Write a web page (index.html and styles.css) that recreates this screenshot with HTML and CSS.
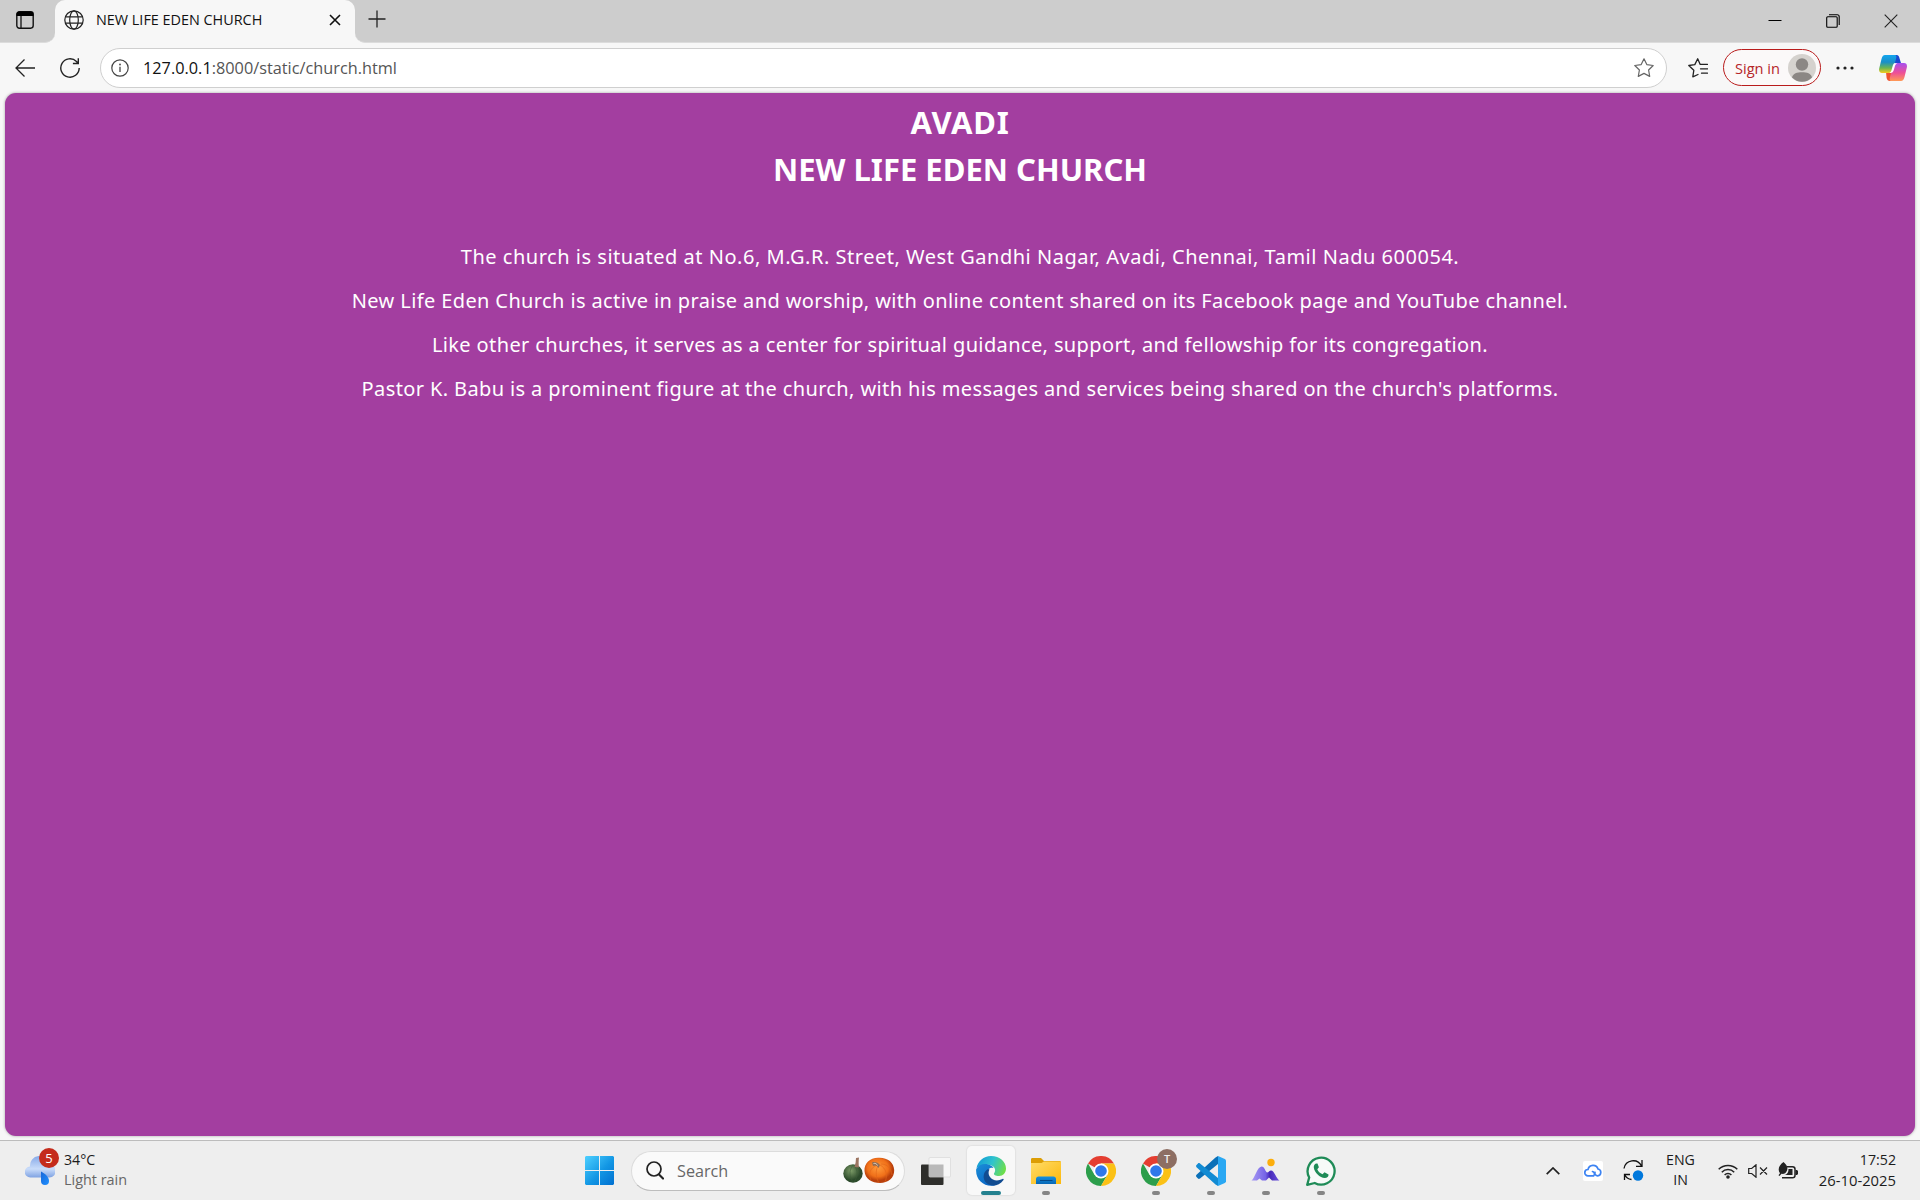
FILE: index.html
```html
<!DOCTYPE html>
<html lang="en">
<head>
<meta charset="utf-8">
<title>NEW LIFE EDEN CHURCH</title>
<link rel="stylesheet" href="styles.css">
</head>
<body>
<div class="screen">
  <header class="tabs">
    <div class="tabs-left">
      <svg width="18" height="18" viewBox="0 0 18 18"><rect x=".8" y=".8" width="16.4" height="16.4" rx="2.6" fill="none" stroke="#111" stroke-width="1.4"/><path d="M.5 5V3A2.6 2.6 0 0 1 3 .5h12A2.6 2.6 0 0 1 17.5 3v2z" fill="#000"/><path d="M5 5v12" stroke="#111" stroke-width="1.3"/></svg>
    </div>
    <div class="tab-slot">
      <div class="tab">
        <svg width="20" height="20" viewBox="0 0 20 20" fill="none" stroke="#222" stroke-width="1.2"><circle cx="10" cy="10" r="9.2"/><ellipse cx="10" cy="10" rx="4.3" ry="9.2"/><path d="M1.5 6.8h17M1.5 13.2h17"/></svg>
        <span class="tab-title">NEW LIFE EDEN CHURCH</span>
        <svg width="12" height="12" viewBox="0 0 12 12" stroke="#111" stroke-width="1.6"><path d="M1 1l10 10M11 1L1 11"/></svg>
      </div>
    </div>
    <div class="tabs-right">
      <svg width="18" height="18" viewBox="0 0 18 18" stroke="#222" stroke-width="1.3"><path d="M9 .5v17M.5 9h17"/></svg>
      <div class="window-controls">
        <svg width="14" height="14" viewBox="0 0 14 14"><path d="M.5 6.5h13" stroke="#000" stroke-width="1"/></svg>
        <svg width="14" height="14" viewBox="0 0 14 14" fill="none" stroke="#000" stroke-width="1.1"><rect x=".7" y="2.7" width="10.5" height="10.5" rx="1"/><path d="M3 .7h8.200a2 2 0 0 1 2 2V11"/></svg>
        <svg width="14" height="14" viewBox="0 0 14 14" stroke="#222" stroke-width="1.1"><path d="M.7.7l12.600 12.600M13.300.7L.7 13.300"/></svg>
      </div>
    </div>
  </header>

  <nav class="toolbar">
    <svg class="back" width="20" height="18" viewBox="0 0 20 18" fill="none" stroke="#222" stroke-width="1.300"><path d="M20 9H1M9.500.5L1 9l8.500 8.500"/></svg>
    <svg class="reload" width="20" height="20" viewBox="0 0 20 20" fill="none" stroke="#222" stroke-width="1.400"><path d="M19.200 10A9.200 9.200 0 1 1 16.500 3.500L18 5.200M18.300.3v5.200h-5.400"/></svg>
    <div class="address">
      <svg width="18" height="18" viewBox="0 0 18 18"><circle cx="9" cy="9" r="8.200" fill="none" stroke="#444" stroke-width="1.200"/><path d="M9 7.800V13" stroke="#444" stroke-width="1.300"/><circle cx="9" cy="5.500" r=".9" fill="#444"/></svg>
      <span class="url"><b>127.0.0.1</b>:8000/static/church.html</span>
      <svg width="20" height="20" viewBox="0 0 20 20" fill="none" stroke="#666" stroke-width="1.200" stroke-linejoin="round"><path d="M10 .8l2.800 5.800 6.400.9-4.600 4.500 1.100 6.400L10 15.400l-5.700 3 1.100-6.400L.8 7.500l6.400-.9z"/></svg>
    </div>
    <svg class="favs" width="20" height="20" viewBox="0 0 20 20" fill="none" stroke="#222" stroke-width="1.300" stroke-linejoin="round" stroke-linecap="round"><path d="M10 16.500l-5.200 2.300 1-6.500L.8 7.500l6-.9L9.700.8l2.500 5.600M12.200 6.400h7.300M12.500 10.800h7M13.500 15.200h6"/></svg>
    <div class="signin"><span>Sign in</span>
      <svg width="28" height="28" viewBox="0 0 28 28"><circle cx="14" cy="14" r="14" fill="#d5d2ce"/><circle cx="14" cy="10.500" r="6.200" fill="#8b8784"/><path d="M4 23.500C5 19.500 9 18.300 14 18.300s9 1.200 10 5.200A14 14 0 0 1 4 23.500z" fill="#8b8784"/></svg>
    </div>
    <svg class="dots" width="18" height="4" viewBox="0 0 18 4" fill="#222"><circle cx="2" cy="2" r="1.600"/><circle cx="9" cy="2" r="1.600"/><circle cx="16" cy="2" r="1.600"/></svg>
    <svg class="copilot" width="28" height="26" viewBox="0 0 28 26">
      <defs>
        <linearGradient id="cpA" x1="0" y1="0" x2="0" y2="1"><stop offset="0" stop-color="#12a5ee"/><stop offset=".4" stop-color="#1a8fc8"/><stop offset=".72" stop-color="#6bb552"/><stop offset="1" stop-color="#f5cd1f"/></linearGradient>
        <linearGradient id="cpB" x1="0" y1="0" x2="0" y2="1"><stop offset="0" stop-color="#a64ff0"/><stop offset=".55" stop-color="#ee5096"/><stop offset="1" stop-color="#ff9a55"/></linearGradient>
      </defs>
      <path d="M12 0h5.500c2 0 2.600 1.500 3.200 4l1.300 4h-7z" fill="#1a49d0"/>
      <path d="M7 17h6l2 9h-4c-2 0-2.900-1.200-3.400-3z" fill="#ef5330"/>
      <path d="M6 0h9.500c2 0 2.200 1.500 1.500 4l-3 10.500c-.7 2.500-1.700 3.500-3.800 3.500H3c-2.500 0-3.500-2-2.700-5L2.500 4C3.200 1.500 4.200 0 6 0z" fill="url(#cpA)"/>
      <path d="M22 26h-9.500c-2 0-2.200-1.500-1.500-4l3-10.500c.7-2.500 1.700-3.500 3.800-3.500H25c2.500 0 3.500 2 2.700 5L25.500 22c-.7 2.500-1.700 4-3.500 4z" fill="url(#cpB)"/>
      <path d="M15.200 8.200h3.300c-1.600.5-2.200 1.500-2.700 3.300l-1 3.500c-.6 2-1.500 3-3.400 3h-1.200c1.300-.6 1.900-1.600 2.400-3.300l1-3.500c.4-1.500.9-2.500 1.600-3z" fill="#fff"/>
    </svg>
  </nav>

  <main class="page">
    <h1 class="place">AVADI</h1>
    <h1>NEW LIFE EDEN CHURCH</h1>
    <div class="about">
      <p>The church is situated at No.6, M.G.R. Street, West Gandhi Nagar, Avadi, Chennai, Tamil Nadu 600054.</p>
      <p>New Life Eden Church is active in praise and worship, with online content shared on its Facebook page and YouTube channel.</p>
      <p>Like other churches, it serves as a center for spiritual guidance, support, and fellowship for its congregation.</p>
      <p>Pastor K. Babu is a prominent figure at the church, with his messages and services being shared on the church's platforms.</p>
    </div>
  </main>

  <footer class="taskbar">
    <div class="weather">
      <div class="weather-icon">
        <svg width="30" height="30" viewBox="0 0 30 30">
          <defs><linearGradient id="cl" x1="0" y1="0" x2="0" y2="1"><stop offset="0" stop-color="#86a9e8"/><stop offset=".6" stop-color="#c9dcfa"/><stop offset="1" stop-color="#7fa2e2"/></linearGradient><linearGradient id="dr" x1="0" y1="0" x2="1" y2="1"><stop offset="0" stop-color="#1766d8"/><stop offset="1" stop-color="#2090ff"/></linearGradient></defs>
          <path d="M5.500 21.500a5.500 5.500 0 0 1-.5-11A9.500 9.500 0 0 1 24 8.500a6.500 6.500 0 0 1 .5 13z" fill="url(#cl)"/>
          <path d="M16 15.500c4.500 2.500 8 5.500 8 9.500a4 4 0 0 1-8 0z" fill="url(#dr)"/>
        </svg>
        <span class="badge">5</span>
      </div>
      <div class="two-lines"><span class="temp">34°C</span><span class="dim">Light rain</span></div>
    </div>

    <svg class="start" width="29" height="29" viewBox="0 0 29 29"><defs><linearGradient id="win" gradientUnits="userSpaceOnUse" x1="0" y1="0" x2="29" y2="29"><stop offset="0" stop-color="#4ed0ff"/><stop offset=".55" stop-color="#1296e4"/><stop offset="1" stop-color="#006fd0"/></linearGradient></defs><path d="M1 0h13v14H0V1zM15 0h13l1 1v13H15zM0 15h14v14H1l-1-1zM15 15h14v13l-1 1H15z" fill="url(#win)"/></svg>

    <div class="search">
      <svg width="18" height="19" viewBox="0 0 18 19" fill="none" stroke="#222" stroke-linecap="round"><circle cx="8" cy="8" r="7" stroke-width="1.700"/><path d="M13 13.500l4 4" stroke-width="2.200"/></svg>
      <span>Search</span>
      <svg width="52" height="27" viewBox="0 0 52 27">
        <defs><radialGradient id="gr" cx=".4" cy=".35"><stop offset="0" stop-color="#7d9c68"/><stop offset="1" stop-color="#2c4a2b"/></radialGradient><radialGradient id="or" cx=".45" cy=".4"><stop offset="0" stop-color="#ff9c3c"/><stop offset=".7" stop-color="#f07019"/><stop offset="1" stop-color="#b9400c"/></radialGradient></defs>
        <ellipse cx="10" cy="16.500" rx="9.700" ry="9.300" fill="url(#gr)"/><path d="M10 8c-4 5-4 12 0 17M11 8c4 5 4 12 0 17" fill="none" stroke="#3c5c38" stroke-width=".5"/><path d="M11.500 10c1-3 1.500-6 1.500-9l3-.5c-.5 4-.4 7 0 10z" fill="#9c7562"/>
        <path d="M21.500 14C21 6 27 1 35 .7 44 0 51 5 51.200 13 51.500 21 45 26 37 26c-8 0-15-4-15.500-12z" fill="url(#or)"/><path d="M34 8c-7 3-9 9-6 15M35 9c-3 5-2 12 1 17M37 8c6 3 8 10 5 17M38 7c6 0 10 4 11 11" fill="none" stroke="#e0641a" stroke-width=".6"/><path d="M29 5.500c3-1 6 0 8 2.500l-1.500 3C34 8 32 8 30 9z" fill="#8e6d57"/><path d="M30.500 6.500c2-.5 3 .2 4 2" fill="none" stroke="#e2cdb8"/>
      </svg>
    </div>

    <div class="apps">
      <svg class="taskview" width="30" height="28" viewBox="0 0 30 28"><rect y="7.500" width="22.500" height="20.500" rx="1" fill="#2e2e2b"/><rect x="8" y=".5" width="21.500" height="19.500" rx="1" fill="#f6f6f6" stroke="#d8d8d8" stroke-width=".7"/><path d="M8 7.500h14.500V20H8z" fill="#b9b9b9"/></svg>

      <div class="app active">
        <svg width="30" height="30" viewBox="0 0 30 30">
          <defs><linearGradient id="e1" x1="0" y1=".3" x2="1" y2=".6"><stop offset="0" stop-color="#139bd6"/><stop offset=".5" stop-color="#2fc3ce"/><stop offset="1" stop-color="#6fdf48"/></linearGradient><linearGradient id="e2" x1="0" y1="0" x2=".6" y2="1"><stop offset="0" stop-color="#1a8fd8"/><stop offset="1" stop-color="#0b66c5"/></linearGradient></defs>
          <path d="M.5 12C2 5 7.500 0 15 0c9 0 15 6 15 12.500 0 4.500-3 7.500-7 7.500-3.500 0-5.500-1.200-5-2.500 3-4 0-8.500-6-8.800C7 8.500 3 10 .5 12z" fill="url(#e1)"/>
          <path d="M.2 13C2 9.500 6 7.500 10.500 8c4 .5 6.500 2.500 7 4-4-1-7 2-6.500 7 .6 5 4 9 8.500 10.300C9 32-1 24.500.2 13z" fill="url(#e2)"/>
          <path d="M12 13c-5 3-5.500 9-2.500 13 4 5 13 5 18-2 .5-1-.3-1.500-1-1-5 2.500-10 1.500-12.500-2-1.500-2-2-5-.5-7.500z" fill="#114c91"/>
        </svg>
      </div>
      <div class="app open">
        <svg width="30" height="30" viewBox="0 0 30 30"><defs><linearGradient id="fo" x1="0" y1="0" x2="1" y2="1"><stop offset="0" stop-color="#ffdc69"/><stop offset="1" stop-color="#fcb80b"/></linearGradient><linearGradient id="fb" x1="0" y1="0" x2="0" y2="1"><stop offset="0" stop-color="#1591e0"/><stop offset="1" stop-color="#0867b5"/></linearGradient></defs><path d="M0 3.500C0 2.500.5 2 1.500 2H10l3 3h16.500v5H0z" fill="#dc9d05"/><path d="M0 7h10.500L13 5.500h17V28H0z" fill="url(#fo)"/><path d="M5 28v-5c0-1.500 1-2.500 2.500-2.500h15c1.500 0 2.500 1 2.500 2.500v5z" fill="url(#fb)"/><path d="M9 24.500h12.500" stroke="#064a88"/></svg>
      </div>
      <div class="app">
        <svg width="30" height="30" viewBox="0 0 30 30"><g id="chrome"><path d="M15 15L2 7.500A15 15 0 0 1 28 7.500H15z" fill="#e43e31"/><path d="M15 15l6.500 3.700L15 30A15 15 0 0 1 2 7.500l6.500 11.200z" fill="#2c9e4b"/><path d="M15 7.500h13A15 15 0 0 1 15 30l6.500-11.300z" fill="#fbc116"/><circle cx="15" cy="15" r="7.500" fill="#fff"/><circle cx="15" cy="15" r="5.800" fill="#2f78ea"/></g></svg>
      </div>
      <div class="app open">
        <svg width="30" height="30" viewBox="0 0 30 30"><use href="#chrome"/></svg>
        <span class="profile">T</span>
      </div>
      <div class="app open">
        <svg width="30" height="30" viewBox="0 0 30 30"><path d="M22 8L4 22.500c-.7.6-1.500.6-2 .1L.5 21c-.6-.7-.6-1.500 0-2.200L19.500 1.500 22 0z" fill="#0a70b8"/><path d="M22 22L4 7.500c-.7-.6-1.500-.6-2-.1L.5 9c-.6.7-.6 1.500 0 2.200L19.500 28.500 22 30z" fill="#128bd3"/><path d="M22 0l6.800 3c.8.400 1.200 1 1.200 1.800v20.400c0 .8-.4 1.400-1.200 1.800L22 30z" fill="#2aa8f3"/></svg>
      </div>
      <div class="app open">
        <svg width="30" height="30" viewBox="0 0 30 30"><defs><linearGradient id="mt" x1="0" y1="0" x2="1" y2="0"><stop offset="0" stop-color="#a89bf3"/><stop offset=".5" stop-color="#7563e6"/><stop offset=".65" stop-color="#4527b8"/><stop offset="1" stop-color="#6a52de"/></linearGradient></defs><path d="M.5 24.500C4 22 6 11 10.500 10.500c3-.2 4 5.500 5.500 6 1.500 0 2.500-2 4-2 3.500 0 5 8 8.500 10H21l-3-3-3 3h-4l-2.500-2-2.500 2z" fill="url(#mt)"/><circle cx="20" cy="6.500" r="3.700" fill="#fcae0c"/></svg>
      </div>
      <div class="app open">
        <svg width="30" height="30" viewBox="0 0 30 30"><path d="M1.200 28.800l2-7.300A13.500 13.500 0 1 1 8.700 27z" fill="#f7faf8" stroke="#1f8b57" stroke-width="2.300" stroke-linejoin="round"/><path d="M10.500 7.500c-1.500 0-3 1.700-2.700 4 .6 5 6 10.300 11 10.500 2.300 0 4-1.500 3.700-3.500l-4-2.200-2 2c-2.500-1-4.500-3-5.200-5l1.600-2-1.400-3.800z" fill="#1f8b57"/></svg>
      </div>
    </div>

    <div class="tray">
      <svg class="caret" width="14" height="8" viewBox="0 0 14 8" fill="none" stroke="#222" stroke-width="1.700"><path d="M.7 7.200L7 1l6.300 6.200"/></svg>
      <span class="cloud"><svg width="18" height="13" viewBox="0 0 18 13" fill="none" stroke="#3c83f2" stroke-width="1.700" stroke-linecap="round"><path d="M9.500 11.900H4A3.200 3.200 0 0 1 4 5.500a5.200 5.200 0 0 1 10-.5 3.500 3.500 0 0 1-.3 6.900 2.800 2.800 0 0 1-2.700-3.600M9.500 11.900a2.500 2.500 0 0 0-1-4.400"/></svg></span>
      <svg class="sync" width="21" height="21" viewBox="0 0 21 21" fill="none" stroke="#111" stroke-width="1.300"><path d="M1 8.500A9.300 9.300 0 0 1 18.500 6M19 0v6.300h-6M1.500 20v-5.500H7M1.500 14.500a9.300 9.300 0 0 0 7 5"/><circle cx="15" cy="15.500" r="5.200" fill="#0078dc" stroke="none"/></svg>
      <div class="two-lines lang"><span>ENG</span><span>IN</span></div>
      <svg class="wifi" width="20" height="16" viewBox="0 0 20 16" fill="none" stroke="#222" stroke-width="1.500"><path d="M.7 6.300a13 13 0 0 1 18.600 0M3.800 9.200a8.700 8.700 0 0 1 12.400 0M6.600 12a4.800 4.800 0 0 1 6.800 0"/><circle cx="10" cy="14" r="1.800" fill="#222" stroke="none"/></svg>
      <svg class="sound" width="20" height="14" viewBox="0 0 20 14" fill="none" stroke="#222" stroke-width="1.200"><path d="M.7 4.500h3L8 .8v12.400L3.700 9.500h-3zM12 3.500l7 7M19 3.500l-7 7"/></svg>
      <svg class="battery" width="20" height="17" viewBox="0 0 20 17"><path d="M9 4.700h5.500a2.500 2.500 0 0 1 2.500 2.500v6a2.500 2.500 0 0 1-2.500 2.500H4" fill="none" stroke="#222" stroke-width="1.500"/><path d="M10.500 7h4v6H5.500c3 0 5-2 5-6z" fill="#222"/><path d="M17.500 8h1.500l1 1v3l-1 1h-1.500z" fill="#222"/><path d="M5.500 0C9 3 10 5.500 9 8.500 8 11.500 5.500 12.300 3.500 11.800L1.500 14l-1-.7L2 11.200C-.5 8 .5 3.500 5.500 0z" fill="#222"/></svg>
      <div class="two-lines clock"><span>17:52</span><span class="date">26-10-2025</span></div>
    </div>
  </footer>
</div>
</body>
</html>
```

FILE: styles.css
```css
* { box-sizing: border-box; }
body { margin: 0; overflow: hidden; font-family: "Open Sans", "Noto Sans", sans-serif; color: #1c1c1c; }
svg { display: block; flex: none; }
.screen { width: 1920px; height: 1200px; display: flex; flex-direction: column; background: #f7f7f7; }

/* tab strip */
.tabs { height: 43px; display: flex; flex: none; }
.tabs-left, .tabs-right { background: #cdcdcd; border-bottom: 1px solid #dcdcdc; }
.tabs-left { width: 55px; border-radius: 0 0 10px 0; padding: 11px 0 0 16px; }
.tab-slot { width: 300px; background: #cdcdcd; }
.tab { height: 43px; display: flex; align-items: center; background: #f7f7f7; border-radius: 10px 10px 0 0; padding: 0 14px 3px 9px; }
.tab-title { flex: 1; margin-left: 12px; padding-bottom: 1px; font-size: 14.4px; line-height: 20px; color: #111; white-space: nowrap; }
.tabs-right { flex: 1; display: flex; justify-content: space-between; border-radius: 0 0 0 10px; padding: 10px 22px 0 13px; }
.window-controls { display: flex; gap: 44px; padding-top: 4px; }

/* toolbar */
.toolbar { height: 50px; flex: none; display: flex; align-items: center; padding-left: 15px; }
.reload { margin-left: 25px; }
.address { width: 1567px; height: 40px; margin-left: 20px; display: flex; align-items: center; background: #fff; border: 1px solid #cfcfcf; border-radius: 20px; padding: 0 12px 0 10px; }
.url { flex: 1; margin-left: 14px; padding-bottom: 1px; font-size: 16.3px; line-height: 22px; color: #555; }
.url b { font-weight: 400; color: #111; }
.favs { margin-left: 21px; }
.signin { width: 98px; height: 37px; margin: 0 0 1px 15px; display: flex; align-items: center; justify-content: space-between; border: 1.5px solid #b91c1c; border-radius: 19px; padding: 0 4px 0 11px; font-size: 14.6px; color: #b5262a; white-space: nowrap; background: #fbf9f9; }
.dots { margin-left: 15px; }
.copilot { margin-left: 25px; }

/* web page */
.page { height: 1043px; flex: none; margin: 0 5px; padding-top: 6px; background: #a33ea0; border-radius: 11px; box-shadow: 0 0 3px rgba(0, 0, 0, .35); color: #fff; text-align: center; font-family: "Noto Sans", "Open Sans", sans-serif; }
.page h1 { margin: 0; font-size: 31px; line-height: 47px; font-weight: 700; }
.page .place { letter-spacing: .7px; }
.about { padding-top: 42px; }
.about p { margin: 0; font-size: 20px; line-height: 44px; letter-spacing: .38px; white-space: nowrap; }
.about p:first-child { letter-spacing: .52px; }

/* taskbar */
.taskbar { height: 60px; flex: none; margin-top: auto; display: flex; align-items: center; background: #eee; border-top: 1px solid #bcbcbc; }
.weather { width: 560px; display: flex; align-items: center; padding-left: 25px; }
.weather-icon { position: relative; width: 30px; }
.badge { position: absolute; left: 14px; top: -8px; width: 20px; height: 20px; border-radius: 50%; background: #c42b1c; color: #fff; font-size: 13px; line-height: 20px; text-align: center; }
.two-lines { display: flex; flex-direction: column; font-size: 14.2px; line-height: 20px; padding-bottom: 2px; white-space: nowrap; }
.weather .two-lines { margin-left: 9px; }
.two-lines .dim { font-size: 14.4px; color: #666; }
.start { margin-left: 25px; }
.search { width: 274px; height: 40px; margin-left: 17px; display: flex; align-items: center; background: #fafafa; border: 1px solid #dcdcdc; border-bottom-color: #bdbdbd; border-radius: 20px; padding: 0 9px 0 14px; font-size: 16.2px; color: #666; }
.search span { flex: 1; margin-left: 13px; }
.apps { display: flex; align-items: center; gap: 7px; margin-left: 16px; }
.taskview { margin-right: 9px; }
.app { position: relative; width: 48px; height: 49px; display: flex; align-items: center; justify-content: center; border-radius: 5px; }
.active { background: #f8f8f8; box-shadow: 0 0 1px 1px #e2e2e2; }
.active::after, .open::after { content: ""; position: absolute; left: 20px; bottom: 0; width: 8px; height: 4px; border-radius: 2px; background: #858585; }
.active::after { left: 14px; width: 20px; background: #24818f; }
.profile { position: absolute; left: 25px; top: 3px; width: 20px; height: 20px; border-radius: 50%; background: #8d6e63; color: #eee; font-size: 11px; font-weight: 600; line-height: 20px; text-align: center; }
.tray { flex: 1; display: flex; align-items: center; justify-content: flex-end; padding-right: 24px; }
.cloud { width: 20px; height: 20px; margin-left: 23px; display: flex; align-items: center; justify-content: center; background: #fff; border-radius: 2px; }
.sync { margin-left: 20px; }
.lang { width: 29px; margin-left: 22px; align-items: center; }
.wifi { margin-left: 23px; }
.sound { margin-left: 10px; }
.battery { margin-left: 10px; }
.clock { width: 78px; margin-left: 20px; align-items: flex-end; }
.date { font-size: 14.8px; }
```
